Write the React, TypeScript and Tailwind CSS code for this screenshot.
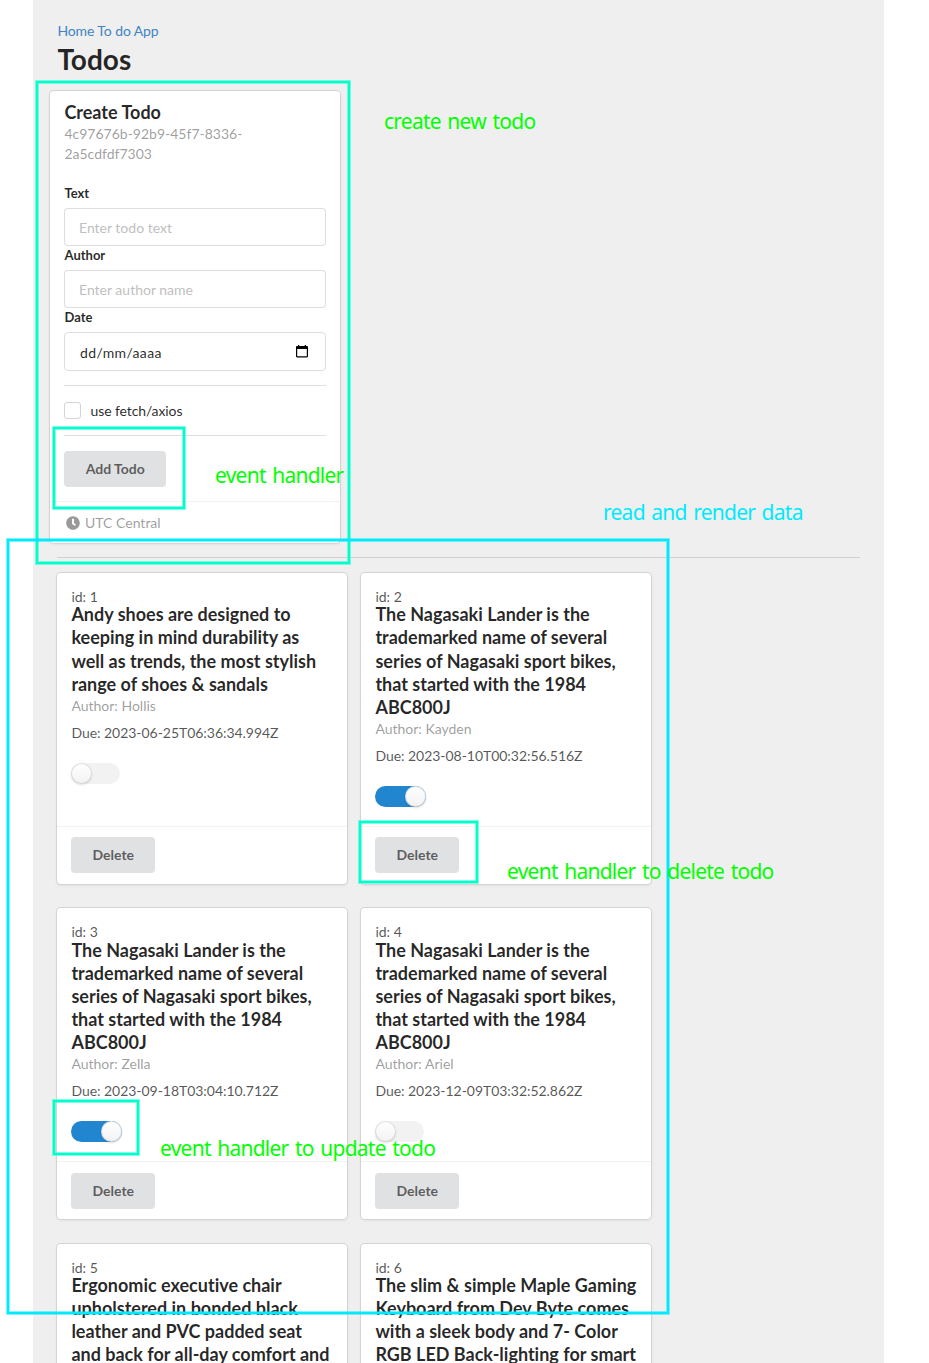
import React from "react";

type Todo = {
  id: number;
  lines: string[];
  author: string;
  due: string;
  done: boolean;
};

const NAGASAKI = [
  "The Nagasaki Lander is the",
  "trademarked name of several",
  "series of Nagasaki sport bikes,",
  "that started with the 1984",
  "ABC800J",
];

const todos: Todo[] = [
  {
    id: 1,
    lines: [
      "Andy shoes are designed to",
      "keeping in mind durability as",
      "well as trends, the most stylish",
      "range of shoes & sandals",
    ],
    author: "Hollis",
    due: "2023-06-25T06:36:34.994Z",
    done: false,
  },
  { id: 2, lines: NAGASAKI, author: "Kayden", due: "2023-08-10T00:32:56.516Z", done: true },
  { id: 3, lines: NAGASAKI, author: "Zella", due: "2023-09-18T03:04:10.712Z", done: true },
  { id: 4, lines: NAGASAKI, author: "Ariel", due: "2023-12-09T03:32:52.862Z", done: false },
];

const previews = [
  {
    id: 5,
    lines: [
      "Ergonomic executive chair",
      "upholstered in bonded black",
      "leather and PVC padded seat",
      "and back for all-day comfort and",
    ],
  },
  {
    id: 6,
    lines: [
      "The slim & simple Maple Gaming",
      "Keyboard from Dev Byte comes",
      "with a sleek body and 7- Color",
      "RGB LED Back-lighting for smart",
    ],
  },
];

const cardClass =
  "flex w-[290px] flex-col rounded-[4px] bg-white shadow-[0_1px_3px_0_#d4d4d5,0_0_0_1px_#d4d4d5]";
const buttonClass =
  "h-9 rounded-[4px] bg-[#e0e1e2] pl-[21.5px] pr-[21px] text-[14px] leading-[14px] font-bold text-black/60";
const inputClass =
  "h-[38px] w-full rounded-[4px] border border-[#22242626] bg-white px-[14px] text-[14px] text-black/85 outline-none placeholder:text-[#bfbfbf]";
const labelClass =
  "block h-[24px] pt-[1px] pl-[0.5px] text-[13px] leading-[17px] font-bold text-black/85";

function Toggle({ on }: { on: boolean }) {
  return (
    <div
      role="switch"
      aria-checked={on}
      className={
        on
          ? "flex h-[21px] w-[51px] justify-end rounded-full bg-[#2185d0]"
          : "flex h-[21px] w-[49px] justify-start rounded-full bg-black/5"
      }
    >
      <span className="size-[21px] rounded-full bg-white bg-linear-to-b from-transparent to-black/5 shadow-[0_1px_2px_0_rgba(34,36,38,0.15),0_0_0_1px_rgba(34,36,38,0.15)_inset]" />
    </div>
  );
}

function TodoHeading({ id, lines }: { id: number; lines: string[] }) {
  return (
    <div className="pl-[0.4px]">
      <div className="h-[16.4px] text-[14px] leading-[20px] text-black/[0.68]">id: {id}</div>
      <h2 className="text-[18px] leading-[23.14px] font-bold whitespace-nowrap text-black/85">
        {lines.map((line) => (
          <span key={line} className="block">
            {line}
          </span>
        ))}
      </h2>
    </div>
  );
}

function TodoCard({ todo }: { todo: Todo }) {
  return (
    <article className={`${cardClass} h-[311.1px]`}>
      <div className="flex-1 p-[14px]">
        <TodoHeading id={todo.id} lines={todo.lines} />
        <div className="pl-[0.4px] text-[14px] leading-[20px] text-black/40">
          Author: {todo.author}
        </div>
        <div className="mt-[7px] pl-[0.4px] text-[14px] leading-[20px] tracking-[-0.04px] text-black/[0.68]">
          Due: {todo.due}
        </div>
        <div className="mt-[19.9px]">
          <Toggle on={todo.done} />
        </div>
      </div>
      <div className="border-t border-black/5 px-[14px] pt-[10.5px] pb-[10.6px]">
        <button className={`${buttonClass} block`}>Delete</button>
      </div>
    </article>
  );
}

function CreateCard() {
  return (
    <section className={`${cardClass} h-[452px]`}>
      <div className="flex-1 px-[14px] pt-[10px]">
        <h2 className="pl-[0.4px] text-[18px] leading-[23px] font-bold text-black/85">
          Create Todo
        </h2>
        <div className="pl-[0.4px] text-[14px] leading-[20px] text-black/40">
          4c97676b-92b9-45f7-8336-
          <br />
          2a5cdfdf7303
        </div>
        <div className="mt-[20px]">
          <label className={labelClass}>Text</label>
          <input className={inputClass} placeholder="Enter todo text" />
          <label className={labelClass}>Author</label>
          <input className={inputClass} placeholder="Enter author name" />
          <label className={labelClass}>Date</label>
          <div className="flex h-[39px] w-full items-center justify-between rounded-[4px] border border-[#22242626] pr-[17px] pl-[15px] text-[14px] text-black/85">
            <span className="pt-[2px] tracking-[0.35px]">dd/mm/aaaa</span>
            <svg width="12" height="13" viewBox="0 0 12 13">
              <path
                fill="#000"
                fillRule="evenodd"
                d="M2 0h1.3v1h5.400V0H10v1h.8c.7 0 1.200.5 1.200 1.200v9.100c0 .7-.5 1.200-1.200 1.200H1.200C.5 12.500 0 12 0 11.300V2.200C0 1.500.5 1 1.200 1H2zM1.200 4v7.300h9.600V4z"
              />
            </svg>
          </div>
        </div>
        <hr className="mt-[14px] border-[#22242626]" />
        <div className="mt-4 flex h-[17px] items-center">
          <span className="size-[17px] rounded-[3px] border border-[#d4d4d5] bg-white" />
          <span className="ml-[9.5px] text-[14px] leading-[17px] tracking-[-0.1px] text-black/85">
            use fetch/axios
          </span>
        </div>
        <hr className="mt-4 border-[#22242626]" />
        <button className={`${buttonClass} mt-[15px] w-[102px]`}>Add Todo</button>
      </div>
      <div className="flex h-[42px] items-center border-t border-black/5 pl-[16px] text-[14px] text-black/40">
        <svg width="14" height="14" viewBox="0 0 512 512" className="mr-[5px]">
          <path
            fill="currentColor"
            d="M256 8C119 8 8 119 8 256s111 248 248 248 248-111 248-248S393 8 256 8zm57.100 350.100L224.900 294c-3.100-2.300-4.900-5.900-4.900-9.700V116c0-6.600 5.400-12 12-12h48c6.600 0 12 5.400 12 12v137.700l63.500 46.200c5.400 3.900 6.500 11.400 2.600 16.800l-28.200 38.800c-3.900 5.300-11.400 6.500-16.800 2.600z"
          />
        </svg>
        UTC Central
      </div>
    </section>
  );
}

const mint =
  "absolute border-2 border-[#00ffcc] shadow-[0_0_0_1px_rgba(0,255,204,0.5),inset_0_0_0_1px_rgba(0,255,204,0.5)]";
const cyan =
  "absolute border-2 border-[#00eaff] shadow-[0_0_0_1px_rgba(0,234,255,0.5),inset_0_0_0_1px_rgba(0,234,255,0.5)]";
const note =
  "absolute font-['Noto_Sans',sans-serif] text-[21px] leading-[28px] tracking-[-0.75px] [word-spacing:1.75px] whitespace-nowrap";

function Annotations() {
  return (
    <div className="pointer-events-none absolute inset-0">
      <div className={`${mint} top-[81px] left-[36px] h-[483px] w-[314px]`} />
      <div className={`${mint} top-[427px] left-[53px] h-[82px] w-[132px]`} />
      <div className={`${mint} top-[821px] left-[359px] h-[62px] w-[119px]`} />
      <div className={`${mint} top-[1100px] left-[53px] h-[55px] w-[86px]`} />
      <div className={`${cyan} top-[539px] left-[7px] h-[775px] w-[662px]`} />
      <span className={`${note} top-[107px] left-[384px] text-[#00ff00]`}>create new todo</span>
      <span className={`${note} top-[461px] left-[215px] text-[#00ff00]`}>event handler</span>
      <span className={`${note} top-[498px] left-[603px] text-[#00eaff]`}>read and render data</span>
      <span className={`${note} top-[857px] left-[507px] text-[#00ff00]`}>event handler to delete todo</span>
      <span className={`${note} top-[1134px] left-[160px] text-[#00ff00]`}>event handler to update todo</span>
    </div>
  );
}

export default function App() {
  return (
    <div className="relative h-[1363px] w-[929px] overflow-hidden bg-white font-['Lato',sans-serif] [font-variant-ligatures:none]">
      <main className="ml-[33px] h-full w-[851px] overflow-hidden bg-[#efefef] px-6 pt-[21px]">
        <a className="block pl-[0.4px] text-[14px] leading-[20px] tracking-[-0.1px] text-[#4183c4]">
          Home To do App
        </a>
        <h1 className="h-[50px] pl-[0.4px] text-[28px] leading-[36px] font-bold text-black/85">
          Todos
        </h1>
        <div className="-ml-[7px]">
          <CreateCard />
        </div>
        <hr className="mt-[14px] w-[803px] border-[#22242626]" />
        <div className="mt-[14.9px] flex w-[594px] flex-wrap gap-x-[14px] gap-y-[24.3px]">
          {todos.map((todo) => (
            <TodoCard key={todo.id} todo={todo} />
          ))}
          {previews.map((item) => (
            <article key={item.id} className={`${cardClass} h-[130px] p-[14px]`}>
              <TodoHeading id={item.id} lines={item.lines} />
            </article>
          ))}
        </div>
      </main>
      <Annotations />
    </div>
  );
}
